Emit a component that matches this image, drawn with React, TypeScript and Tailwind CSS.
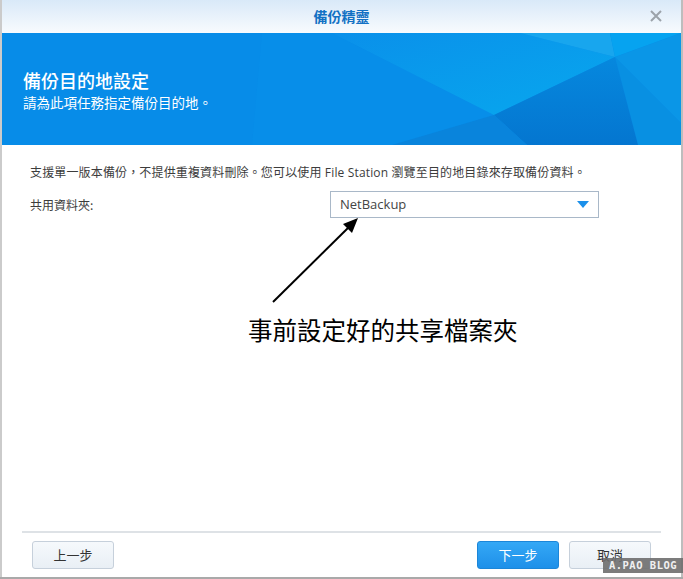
import React from "react";

const cjk = { fontFamily: '"Noto Sans CJK TC", "Noto Sans", sans-serif' };
const mixed = { fontFamily: '"Open Sans", "Noto Sans CJK TC", sans-serif' };

function BannerFacets() {
  return (
    <svg
      className="absolute inset-0"
      width="679"
      height="112"
      viewBox="0 0 679 112"
      preserveAspectRatio="none"
    >
      <defs>
        <linearGradient id="glow" x1="0" y1="0" x2="1" y2="1">
          <stop offset="0" stopColor="#0a90ea" />
          <stop offset="0.75" stopColor="#08a2ed" />
          <stop offset="1" stopColor="#06aef0" />
        </linearGradient>
        <linearGradient id="deep" x1="0" y1="0" x2="0" y2="1">
          <stop offset="0" stopColor="#0688de" />
          <stop offset="1" stopColor="#0476d0" />
        </linearGradient>
      </defs>
      <rect width="679" height="112" fill="#078ce8" />
      <polygon points="260,0 330,0 492,82 390,112 250,112" fill="#0990e9" opacity="0.6" />
      <polygon points="330,0 518,0 613,24 492,82" fill="url(#glow)" />
      <polygon points="518,0 608,0 613,24" fill="#18a6ee" />
      <polygon points="608,0 679,0 613,24" fill="#06a3f0" />
      <polygon points="613,24 679,0 679,90" fill="#0a96e7" />
      <polygon points="613,24 679,90 679,112 636,112" fill="#0890e2" />
      <polygon points="613,24 636,112 525,112 492,82" fill="url(#deep)" />
      <polygon points="492,82 525,112 390,112" fill="#0984dc" />
    </svg>
  );
}

function CloseIcon() {
  return (
    <svg width="12" height="12" viewBox="0 0 12 12">
      <path d="M1 1 L11 11 M11 1 L1 11" stroke="#9ca3aa" strokeWidth="2" />
    </svg>
  );
}

function Arrow() {
  return (
    <svg
      className="absolute left-0 top-0"
      width="679"
      height="400"
      viewBox="0 0 679 400"
    >
      <line x1="271" y1="157" x2="349" y2="80" stroke="#000" strokeWidth="2" />
      <polygon points="356,73 341,79 350,88" fill="#000" />
    </svg>
  );
}

export default function App() {
  return (
    <div className="w-[683px] h-[579px] bg-[#a9a9a9] flex flex-col">
      <div className="flex h-[577px]">
        <div className="w-[2px] bg-[#cbcbcb]" />
        <div className="w-[679px] bg-white flex flex-col">
          {/* title bar */}
          <div className="h-[33px] flex items-center justify-center relative bg-gradient-to-b from-[#d9e9f8] to-[#f8fbfe]">
            <span className="text-[14px] font-bold text-[#1271c4]" style={cjk}>
              備份精靈
            </span>
            <div className="absolute right-[19px] top-[10px]">
              <CloseIcon />
            </div>
          </div>

          {/* banner */}
          <div className="h-[112px] relative overflow-hidden">
            <BannerFacets />
            <div className="relative pl-[21px] pt-[34px] text-white" style={cjk}>
              <div className="text-[18px] leading-[26px] font-medium">備份目的地設定</div>
              <div className="text-[13.5px] leading-[18px]">請為此項任務指定備份目的地。</div>
            </div>
          </div>

          {/* content */}
          <div className="flex-1 relative pt-[18px] px-[28px]">
            <p className="text-[12px] leading-[20px] tracking-[0.15px] text-[#3c3c3c]" style={mixed}>
              支援單一版本備份，不提供重複資料刪除。您可以使用 File Station 瀏覽至目的地目錄來存取備份資料。
            </p>
            <div className="mt-[8px] flex items-center">
              <span className="w-[300px] text-[12px] text-[#3c3c3c]" style={cjk}>
                共用資料夾:
              </span>
              <div className="w-[269px] h-[27px] border border-[#a9b8c8] flex items-center justify-between pl-[9px] pr-[9px]">
                <span className="text-[13px] text-[#444]" style={mixed}>
                  NetBackup
                </span>
                <span className="w-0 h-0 border-l-[6px] border-r-[6px] border-t-[7px] border-l-transparent border-r-transparent border-t-[#1b90ea]" />
              </div>
            </div>
            <Arrow />
            <div
              className="absolute left-[246px] top-[170px] text-[24.5px] leading-[30px] text-black"
              style={cjk}
            >
              事前設定好的共享檔案夾
            </div>
          </div>

          {/* footer */}
          <div className="mx-[20px] h-[2px] bg-[#dee2e6]" />
          <div className="h-[44px] flex items-start pt-[8px] px-[30px]">
            <button
              className="w-[82px] h-[28px] rounded-[3px] border border-[#c6d0db] bg-gradient-to-b from-[#f6f9fc] to-[#e9eff5] text-[13px] text-[#333]"
              style={cjk}
            >
              上一步
            </button>
            <div className="flex-1" />
            <button
              className="w-[82px] h-[28px] rounded-[3px] border border-[#1c86d8] bg-gradient-to-b from-[#34a8f6] to-[#1e90e9] text-[13px] text-white"
              style={cjk}
            >
              下一步
            </button>
            <button
              className="ml-[10px] w-[82px] h-[28px] rounded-[3px] border border-[#c6d0db] bg-gradient-to-b from-[#f6f9fc] to-[#e9eff5] text-[13px] text-[#333]"
              style={cjk}
            >
              取消
            </button>
          </div>
        </div>
        <div className="w-[2px] bg-[#bdbdbd]" />
      </div>
      <div className="relative">
        <div className="absolute right-0 bottom-[4px] w-[80px] h-[15px] bg-[#6e6e6e]/90 flex items-center justify-center overflow-hidden">
          <span
            className="text-[10.5px] font-bold tracking-[0.5px] text-[#f0f0f0] whitespace-nowrap"
            style={{ fontFamily: '"DejaVu Sans Mono", monospace' }}
          >
            A.PAO BLOG
          </span>
        </div>
      </div>
    </div>
  );
}
